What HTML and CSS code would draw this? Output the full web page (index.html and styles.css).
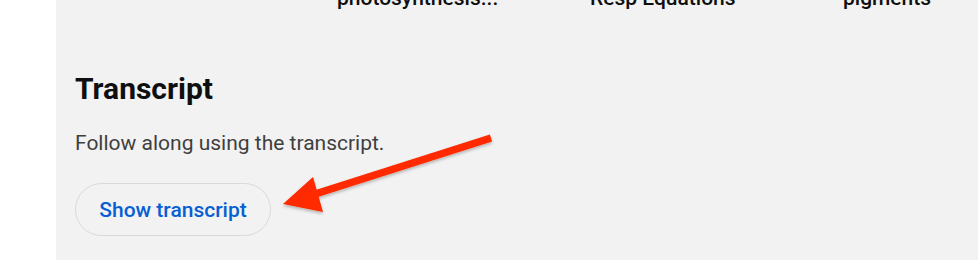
FILE: index.html
```html
<!DOCTYPE html>
<html>
<head>
<meta charset="utf-8">
<link rel="stylesheet" href="styles.css">
</head>
<body>
<div class="page">
  <div class="side"></div>
  <main class="main">
    <div class="cards">
      <div class="card"><div class="card-title"></div></div>
      <div class="card"><div class="card-title">photosynthesis...</div></div>
      <div class="card"><div class="card-title">Resp Equations</div></div>
      <div class="card"><div class="card-title">pigments</div></div>
    </div>
    <section class="transcript">
      <h2 class="t-title">Transcript</h2>
      <p class="t-desc">Follow along using the transcript.</p>
      <button class="t-btn">Show transcript</button>
    </section>
  </main>
  <svg class="arrow" width="978" height="260" viewBox="0 0 978 260">
    <defs>
      <filter id="sh" x="-10%" y="-10%" width="120%" height="130%">
        <feDropShadow dx="0" dy="2" stdDeviation="1.5" flood-color="#000" flood-opacity="0.25"/>
      </filter>
    </defs>
    <g filter="url(#sh)" fill="#ff2a00" stroke="none">
      <line x1="491" y1="138" x2="312" y2="195" stroke="#ff2a00" stroke-width="7.5"/>
      <polygon points="283,204 313,177 323,212"/>
    </g>
  </svg>
</div>
</body>
</html>
```

FILE: styles.css
```css
html, body {
  margin: 0;
  padding: 0;
  background: #ffffff;
}
body {
  font-family: Roboto, "Liberation Sans", sans-serif;
}
.page {
  position: relative;
  display: flex;
  width: 978px;
  height: 260px;
  overflow: hidden;
}
.side {
  width: 56px;
  flex: 0 0 56px;
  background: #ffffff;
}
.main {
  flex: 1;
  background: #f2f2f2;
  padding-left: 19px;
}
.cards {
  display: flex;
  gap: 10px;
  margin-top: -16px;
}
.card {
  width: 243px;
  flex: 0 0 243px;
}
.card-title {
  padding-left: 9px;
  font-size: 21px;
  font-weight: 500;
  line-height: 28px;
  height: 28px;
  color: #0f0f0f;
  white-space: nowrap;
}
.transcript {
  padding-top: 59px;
}
.t-title {
  margin: 0;
  font-size: 30px;
  font-weight: 700;
  line-height: 36px;
  color: #0f0f0f;
}
.t-desc {
  margin: 22px 0 0;
  font-size: 21px;
  line-height: 28px;
  color: #3f3f3f;
}
.t-btn {
  display: block;
  margin-top: 26px;
  width: 196px;
  height: 53px;
  border: 1px solid #d9d9d9;
  border-radius: 27px;
  background: #f2f2f2;
  color: #065fd4;
  font-family: Roboto, "Liberation Sans", sans-serif;
  font-size: 21px;
  font-weight: 500;
  padding: 0;
  cursor: pointer;
}
.arrow {
  position: absolute;
  left: 0;
  top: 0;
  pointer-events: none;
}
```
